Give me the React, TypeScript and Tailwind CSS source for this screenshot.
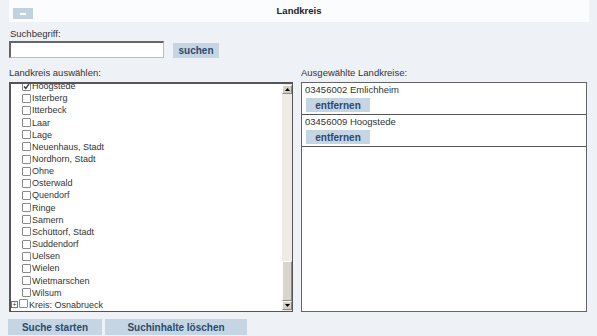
import React from 'react'

const font = { fontFamily: '"Liberation Sans", Arial, sans-serif' }

const orte = [
  'Hoogstede',
  'Isterberg',
  'Itterbeck',
  'Laar',
  'Lage',
  'Neuenhaus, Stadt',
  'Nordhorn, Stadt',
  'Ohne',
  'Osterwald',
  'Quendorf',
  'Ringe',
  'Samern',
  'Schüttorf, Stadt',
  'Suddendorf',
  'Uelsen',
  'Wielen',
  'Wietmarschen',
  'Wilsum',
]

const ausgewaehlt = ['03456002 Emlichheim', '03456009 Hoogstede']

function Checkbox({ checked }: { checked?: boolean }) {
  return (
    <span className="inline-flex h-[9px] w-[9px] shrink-0 items-center justify-center rounded-[1px] border border-[#8a8a8a] bg-white">
      {checked && (
        <svg width="7" height="7" viewBox="0 0 7 7">
          <path d="M1 3.5 L2.8 5.5 L6 1.2" stroke="#333" strokeWidth="1.4" fill="none" />
        </svg>
      )}
    </span>
  )
}

function Btn({ children, className }: { children: React.ReactNode; className: string }) {
  return (
    <button
      className={`flex items-center justify-center bg-[#c6d5e4] text-[10px] font-bold text-[#2b4a6c] ${className}`}
    >
      {children}
    </button>
  )
}

export default function App() {
  return (
    <div style={font} className="h-[336px] w-[597px] overflow-hidden bg-[#eef2f7] text-[#333]">
      {/* Kopfzeile */}
      <div className="relative ml-[9px] flex h-[22px] w-[580px] items-center justify-center bg-[#fafcfe]">
        <div className="absolute left-[4px] top-[8px] flex h-[11px] w-[20px] items-center justify-center bg-[#c3d1df]">
          <span className="h-[2px] w-[6px] bg-white" />
        </div>
        <span className="text-[9.5px] font-bold text-[#222]">Landkreis</span>
      </div>

      {/* Suche */}
      <div className="mt-[6px] px-[10px] text-[9.5px] leading-[12px]">Suchbegriff:</div>
      <div className="mt-[1px] flex items-start pl-[9px]">
        <input
          type="text"
          className="h-[17px] w-[155px] border-l-2 border-t-2 border-r border-b border-l-[#666] border-t-[#666] border-r-[#bbb] border-b-[#bbb] bg-white outline-none"
        />
        <Btn className="ml-[9px] mt-[2px] h-[15px] w-[46px]">suchen</Btn>
      </div>

      {/* Listen */}
      <div className="mt-[9px] flex pl-[9px]">
        <div className="w-[284px]">
          <div className="text-[9.5px] leading-[12px]">Landkreis auswählen:</div>
          <div className="mt-[3px] flex h-[230px] border-l-2 border-t-2 border-r border-b border-[#555] bg-white">
            <div className="flex-1 overflow-hidden">
              <div className="-mt-[4px] text-[9px]">
                {orte.map((o, i) => (
                  <div key={o} className="flex h-[12.17px] items-center pl-[11px] leading-[12px]">
                    <Checkbox checked={i === 0} />
                    <span className="ml-[1px] whitespace-nowrap">{o}</span>
                  </div>
                ))}
                <div className="flex h-[12.17px] items-center leading-[12px]">
                  <span className="flex h-[7px] w-[7px] items-center justify-center border border-[#777] bg-white text-[7px] leading-[5px] text-[#333]">
                    +
                  </span>
                  <span className="ml-[1px]">
                    <Checkbox />
                  </span>
                  <span className="ml-[1px] whitespace-nowrap">Kreis: Osnabrueck</span>
                </div>
              </div>
            </div>
            {/* Scrollbar */}
            <div className="flex w-[10px] flex-col bg-[#efece6]">
              <div className="mt-[1px] flex h-[9px] items-center justify-center border border-b-[#888] border-l-[#fff] border-r-[#888] border-t-[#fff] bg-[#d4d0c8]">
                <svg width="5" height="3" viewBox="0 0 5 3">
                  <path d="M0 3 L2.5 0 L5 3 Z" fill="#000" />
                </svg>
              </div>
              <div className="flex-1" />
              <div className="h-[40px] border border-b-[#888] border-l-[#fff] border-r-[#888] border-t-[#fff] bg-[#d8d5cd]" />
              <div className="mb-[1px] flex h-[9px] items-center justify-center border border-b-[#888] border-l-[#fff] border-r-[#888] border-t-[#fff] bg-[#d4d0c8]">
                <svg width="5" height="3" viewBox="0 0 5 3">
                  <path d="M0 0 L2.5 3 L5 0 Z" fill="#000" />
                </svg>
              </div>
            </div>
          </div>
        </div>

        <div className="ml-[8px] w-[286px]">
          <div className="text-[9.5px] leading-[12px]">Ausgewählte Landkreise:</div>
          <div className="mt-[3px] h-[230px] border border-[#666] bg-white">
            {ausgewaehlt.map((a) => (
              <div key={a} className="border-b border-[#555] pb-[2px] pl-[3px] pt-[1px]">
                <div className="text-[9.5px] leading-[12px]">{a}</div>
                <Btn className="ml-[1px] mt-[2px] h-[14px] w-[64px]">entfernen</Btn>
              </div>
            ))}
          </div>
        </div>
      </div>

      {/* Aktionen */}
      <div className="mt-[7px] flex gap-[3px] pl-[8px]">
        <Btn className="h-[16px] w-[94px]">Suche starten</Btn>
        <Btn className="h-[16px] w-[142px]">Suchinhalte löschen</Btn>
      </div>
    </div>
  )
}
